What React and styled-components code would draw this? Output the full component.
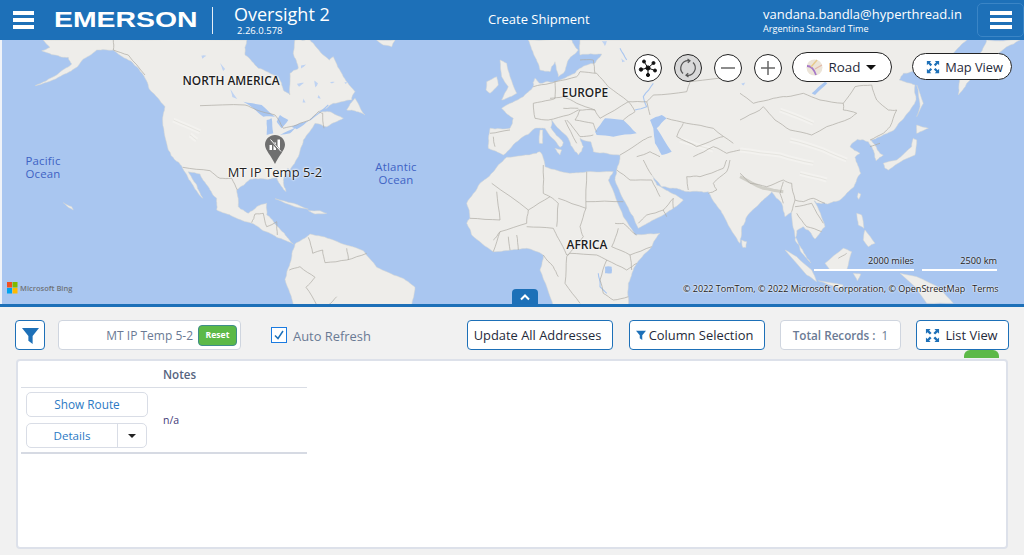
import React from "react";
import styled, { createGlobalStyle } from "styled-components";

const Global = createGlobalStyle`
  html, body { margin: 0; padding: 0; height: 100%; background: #f1f1f1; }
  body { font-family: "Open Sans", "Noto Sans", sans-serif; overflow: hidden; }
  * { box-sizing: border-box; }
`;

const Page = styled.div`
  width: 1024px; height: 555px; display: flex; flex-direction: column; background: #f1f1f1;
`;
const Header = styled.header`
  height: 40px; flex: none; background: #1d70b8; color: #fff; display: flex; align-items: center; position: relative;
`;
const Burger = styled.div`
  width: ${p => p.$w}px; display: flex; flex-direction: column; gap: 3.5px;
  span { display: block; height: 3.5px; background: #fff; }
`;
const LeftGroup = styled.div`
  display: flex; align-items: center; width: 488px; padding-left: 13px; height: 40px;
`;
const LogoSlot = styled.div`
  width: 142px; margin-left: 20px; margin-right: 1px; height: 24px; overflow: visible; margin-top: -1px;
`;
const Logo = styled.div`
  font-family: "Liberation Sans", sans-serif; font-weight: 700; font-size: 22px; line-height: 24px;
  transform: scaleX(1.29); transform-origin: left center; white-space: nowrap;
`;
const Divider = styled.div`
  width: 1px; height: 27px; background: #e6eef6; margin: 0 21px 0 15px;
`;
const Product = styled.div`
  display: flex; flex-direction: column; margin-top: -3px;
`;
const ProductName = styled.div`font-size: 18px; line-height: 22px; font-weight: 400;`;
const Version = styled.div`font-size: 9.5px; line-height: 9px; margin-left: 3px; margin-top: 1px;`;
const Center = styled.div`
  width: 275px; font-size: 13px; line-height: 16px; margin-top: -2px;
`;
const User = styled.div`
  width: 214px; display: flex; flex-direction: column;
`;
const Email = styled.div`font-size: 13px; line-height: 18px; white-space: nowrap;`;
const Zone = styled.div`font-size: 9.1px; line-height: 12px; white-space: nowrap;`;
const MenuButton = styled.div`
  width: 47px; height: 34px; border: 1px solid #3a85c6; border-radius: 5px;
  display: flex; align-items: center; justify-content: center;
`;

const MapArea = styled.div`
  height: 264px; flex: none; position: relative; overflow: hidden; background: #a9c6f0;
  border-left: 2px solid #f0f3f8;
`;
const MapSvg = styled.svg`
  position: absolute; left: -2px; top: 0; display: block;
`;
const Label = styled.div`
  position: absolute; white-space: nowrap; transform: translate(-50%, -50%);
  left: ${p => p.$x - 2}px; top: ${p => p.$y - 40}px;
`;
const Continent = styled(Label)`
  font-size: 11.9px; font-weight: 600; color: #1e1e1e; line-height: 14px;
  text-shadow: 0 0 2px #fff, 0 0 2px #fff;
`;
const Ocean = styled(Label)`
  font-size: 11.4px; letter-spacing: .2px; color: #3e62c4; line-height: 13px; text-align: center;
`;
const PinLabel = styled(Label)`
  font-size: 12.9px; color: #222; letter-spacing: .1px; line-height: 14px;
  text-shadow: 0 0 2px #fff, 0 0 2px #fff, 0 0 3px #fff;
`;
const Pin = styled.svg`
  position: absolute; left: 263px; top: 95px;
`;
const Controls = styled.div`
  position: absolute; top: 12px; left: 632px; display: flex; align-items: flex-start; gap: 10px;
`;
const CircleRow = styled.div`
  display: flex; gap: 12px; margin-top: 2px;
`;
const Circle = styled.div`
  width: 28px; height: 28px; border-radius: 50%; border: 1px solid #222;
  background: ${p => p.$on ? "#d9d9d9" : "#fff"};
  display: flex; align-items: center; justify-content: center;
`;
const Pill = styled.div`
  width: 100px; height: ${p => p.$h}px; border-radius: 15px; border: 1px solid #222; background: #fff;
  display: flex; align-items: center; justify-content: center; gap: ${p => p.$gap}px;
  font-size: ${p => p.$fs}px; color: #1f2a3a; margin-top: ${p => p.$mt}px; margin-left: ${p => p.$ml}px;
  padding-left: ${p => p.$pl}px; padding-right: ${p => p.$pr}px;
`;
const Caret = styled.span`
  width: 0; height: 0; border-left: 5px solid transparent; border-right: 5px solid transparent;
  border-top: 5.5px solid #111; display: inline-block;
`;
const BingMark = styled.div`
  position: absolute; left: 5px; top: 242px; display: flex; align-items: center; gap: 2px;
  font-size: 7.5px; font-weight: 600; color: #6f7378;
`;
const ScaleWrap = styled.div`
  position: absolute; top: 215px; left: 812px; display: flex; gap: 8px;
`;
const ScaleItem = styled.div`
  width: ${p => p.$w}px; text-align: right; font-size: 9.2px; line-height: 12px; color: #222;
  border-bottom: 2px solid #fff; height: 16px; text-shadow: 0 0 2px #fff;
`;
const Copyright = styled.div`
  position: absolute; left: 681px; top: 243px; font-size: 9.03px; line-height: 12px; color: #222;
  white-space: nowrap; display: flex; gap: 7px; text-shadow: 0 0 2px #fff, 0 0 2px #fff;
`;
const Collapse = styled.div`
  position: absolute; left: 510px; bottom: 0; width: 26px; height: 15px; background: #1d70b8;
  border-radius: 4px 4px 0 0; display: flex; align-items: center; justify-content: center;
`;
const Rule = styled.div`height: 3px; flex: none; background: #1d70b8;`;

const Toolbar = styled.div`
  height: 30px; margin: 13px 15px 0 15px; flex: none; display: flex; align-items: center; position: relative;
`;
const BtnBase = styled.div`
  height: 30px; border-radius: 4px; background: #fff; display: flex; align-items: center; white-space: nowrap;
  border: 1px solid ${p => p.$muted ? "#cfd5df" : "#1d70b8"};
  font-size: 12.9px; color: #1f2a3a;
`;
const FilterBtn = styled(BtnBase)`
  width: 30px; justify-content: center;
`;
const SearchBox = styled(BtnBase)`
  width: 183px; margin-left: 13px; justify-content: flex-end; padding-right: 3px; gap: 5px;
  color: #6a7a94; font-size: 12px; border-color: #cfd5df;
`;
const Reset = styled.div`
  width: 39px; height: 21px; border-radius: 4px; background: #5cb947; border: 1px solid #3f8d8a;
  color: #fff; font-size: 8.6px; font-weight: 700; display: flex; align-items: center; justify-content: center;
`;
const Check = styled.div`
  width: 16px; height: 16px; border: 1px solid #1b7be0; background: #fff; margin-left: 30px;
  display: flex; align-items: center; justify-content: center;
`;
const CheckLabel = styled.div`
  font-size: 12.9px; color: #6a7a94; margin-left: 6px; width: 174px; margin-top: 1px;
`;
const ActionBtn = styled(BtnBase)`
  width: ${p => p.$w}px; margin-left: ${p => p.$ml}px; justify-content: center; gap: ${p => p.$gap || 0}px;
  padding-right: ${p => p.$pr || 0}px;
`;
const Total = styled(ActionBtn)`
  color: #6a7a94; font-size: 11.7px; gap: 6px; b { font-weight: 600; }
`;
const GreenTab = styled.div`
  position: absolute; right: 10px; top: 30px; width: 35px; height: 8px; background: #5cb947; border-radius: 6px 6px 0 0;
`;
const Panel = styled.div`
  margin: 9px 16px 0 16px; height: 190px; flex: none; background: #fff; border: 2px solid #dde1ea; border-radius: 4px;
  padding: 0 0 0 3px;
`;
const Grid = styled.div`
  width: 286px; display: flex; flex-direction: column;
`;
const HeadRow = styled.div`
  height: 27px; border-bottom: 1px solid #d9dde5; padding-left: 142px; display: flex; align-items: center;
  font-size: 11.6px; font-weight: 600; color: #55647f;
`;
const BodyRow = styled.div`
  height: 66px; border-bottom: 2px solid #d6dae3; display: flex;
`;
const ActionCol = styled.div`
  width: 142px; padding: 4px 0 0 5px; display: flex; flex-direction: column; gap: 6px;
`;
const ShowRoute = styled.div`
  width: 122px; height: 25px; border: 1px solid #d9dde6; border-radius: 5px; color: #2c79c4; font-size: 11.8px;
  display: flex; align-items: center; justify-content: center; padding-bottom: 1px;
`;
const SplitBtn = styled.div`
  width: 121px; height: 25px; border: 1px solid #d9dde6; border-radius: 5px; display: flex; color: #2c79c4; font-size: 11.6px;
`;
const SplitMain = styled.div`
  width: 91px; border-right: 1px solid #d9dde6; display: flex; align-items: center; justify-content: center;
`;
const SplitCaret = styled.div`
  flex: 1; display: flex; align-items: center; justify-content: center;
  span { width: 0; height: 0; border-left: 4px solid transparent; border-right: 4px solid transparent; border-top: 4px solid #222; }
`;
const NoteCell = styled.div`
  font-size: 10.5px; color: #3f3a78; align-self: center;
`;

/* ---------- map geometry: traced in crop coordinates, converted to map pixels ---------- */
const Z = {
  a: [0, 0],
  b: [200, 0],
  e: [480, 0],
  f: [740, 0],
  g: [460, 120]
};
const pts = (k, s) => s.trim().split(/\s+/).map(p => {
  const [x, y] = p.split(",").map(Number);
  return [Z[k][0] + x / 3, Z[k][1] + y / 3];
});
let seed = 12345;
const rnd = () => { seed = (seed * 1103515245 + 12345) & 0x7fffffff; return seed / 0x7fffffff - 0.5; };
const rough = (p, closed, amp, iters) => {
  let cur = p;
  let a = amp;
  for (let it = 0; it < iters; it++) {
    const next = [];
    const n = closed ? cur.length : cur.length - 1;
    for (let i = 0; i < n; i++) {
      const A = cur[i], B = cur[(i + 1) % cur.length];
      next.push(A);
      const dx = B[0] - A[0], dy = B[1] - A[1], len = Math.hypot(dx, dy);
      if (len > 1.6) {
        const o = rnd() * a * Math.min(1, len / 6);
        next.push([(A[0] + B[0]) / 2 - dy / len * o, (A[1] + B[1]) / 2 + dx / len * o]);
      }
    }
    if (!closed) next.push(cur[cur.length - 1]);
    cur = next;
    a *= 0.6;
  }
  return cur;
};
const toD = (p, closed) => "M" + p.map(q => q[0].toFixed(1) + " " + q[1].toFixed(1)).join("L") + (closed ? "Z" : "");
const land = (...parts) => toD(rough(parts.flat(), true, 2, 3), true);
const soft = (k, s) => toD(rough(pts(k, s), true, 0.9, 2), true);
const line = (k, s) => toD(rough(pts(k, s), false, 1.1, 2), false);
const pond = (k, s) => {
  const p = pts(k, s);
  const cx = p.reduce((t, q) => t + q[0], 0) / p.length;
  const cy = p.reduce((t, q) => t + q[1], 0) / p.length;
  return toD(rough(p.map(q => [cx + (q[0] - cx) * 0.6, cy + (q[1] - cy) * 0.6]), true, 0.8, 2), true);
};

const LANDS = [
  land(
    pts("a", "130,0 150,22 125,32 165,45 205,52 215,72 170,105 105,137 175,112 225,85 245,62 290,30 340,30 385,60 410,80 432,108 450,150 495,200 488,245 505,330 525,360 545,378 575,430 608,475 590,435 565,395 600,402 625,440 650,475 650,510 700,530 755,550 790,572 830,592 880,612 860,590 825,552 800,525 800,490 770,500 745,520 715,500 710,450 750,418 800,418 830,412 845,440 858,455 850,420 862,385"),
    pts("b", "270,390 295,350 310,300 345,250 380,260 430,235 390,215 355,215 400,190 455,180 465,155 430,110 400,50 388,60 340,10 330,0 285,0 280,40 295,85 270,100 270,165 250,150 235,110 175,85 135,45 140,0")
  ),
  land(pts("a", "885,612 930,582 1000,600 1090,632 1130,682 1200,712 1245,742 1235,800 880,800 855,718 870,670")),
  land(pts("b", "440,210 465,175 495,225 470,215")),
  soft("b", "530,0 585,0 575,20 550,15"),
  soft("a", "825,476 880,490 925,508 885,500"),
  soft("a", "925,512 960,512 980,520 945,522"),
  soft("a", "190,488 215,500 220,510 205,502"),
  land(
    pts("e", "300,0"),
    pts("f", "680,0 640,40 590,60 530,90 490,100 478,120 525,135 528,180 500,222 462,270 420,290 392,300 412,330 430,345 408,362 396,322 385,305 352,298 330,320 360,340 345,352 362,400 342,440 300,480 262,492 240,490 222,482 255,560 225,597 205,570 190,560 170,572 165,600 192,640 212,668 180,630 165,590 155,515 135,530 125,490 95,455 70,480 20,530 5,560 0,610"),
    pts("g", "835,245 790,165 755,115 745,95 690,95 650,85 605,80 575,45 590,75 635,100 670,120 640,145 590,175 535,205 500,135 465,60 470,30"),
    pts("e", "420,345 340,335 332,305 300,295 310,320 295,345 285,335 265,295 215,240 212,262 250,308 240,322 195,265 165,265 120,297 70,345 25,325 30,265 90,265 100,235 65,205 130,170 160,140 165,115 180,130 205,125 225,125 285,100 300,85 345,70 365,42 300,45")
  ),
  land(pts("e", "145,0 160,40 180,90 210,95 225,65 235,110 250,100 265,60 295,30 275,0")),
  land(
    pts("e", "80,352 170,340 180,335 195,375"),
    pts("g", "255,20 330,40 380,35 460,35 445,60 490,170 525,225 600,220 575,260 530,310 505,370 505,440 280,440 240,330 250,285 200,265 150,270 100,275 35,225 20,190 30,175 20,130 60,70 95,40")
  ),
  soft("e", "60,60 80,70 90,110 110,160 80,175 65,180 85,140 65,110"),
  soft("e", "20,125 50,110 55,135 30,160 18,150"),
  soft("e", "225,325 245,330 240,345"),
  soft("e", "180,270 188,270 188,310 178,310"),
  soft("g", "845,240 860,245 858,262 848,262"),
  soft("f", "435,385 430,370 470,360 515,320 520,295 530,300 525,345 490,360 445,390"),
  soft("f", "530,255 565,265 540,275 530,280"),
  soft("f", "530,135 550,190 530,230 540,200 535,160"),
  soft("f", "355,458 362,462 356,478 352,470"),
  soft("f", "350,520 365,525 372,565 355,555"),
  soft("f", "375,570 405,610 385,620 370,600"),
  soft("f", "135,630 170,650 215,690 230,725 200,705"),
  soft("f", "255,670 310,625 335,635 320,690 270,690"),
  soft("f", "340,700 362,702 352,722"),
  soft("f", "480,700 530,710 600,745 640,790 560,790 530,745"),
  soft("f", "235,722 310,735 300,745"),
  land(pts("f", "840,0 800,20 730,70 680,130 655,165 660,110 700,90 720,40 740,0"))
];
const WATERS = [
  soft("b", "130,185 185,195 225,230 190,230 160,205"),
  soft("b", "200,240 215,235 220,280 200,285"),
  soft("b", "240,225 265,240 245,265 230,245"),
  soft("b", "240,285 290,260 270,280"),
  soft("b", "275,260 330,240 290,268"),
  soft("e", "345,275 375,235 430,240 470,280 400,290 350,285"),
  soft("e", "510,240 545,225 560,235 530,265 575,335 545,345 525,310 520,265"),
  soft("f", "215,160 255,125 262,130 225,165"),
  soft("g", "435,320 455,320 455,340 435,340")
];
const PONDS = [
  pond("b", "85,135 120,185 95,175"),
  pond("b", "55,60 80,90 70,100"),
  pond("b", "0,45 25,45 5,60"),
  pond("b", "285,130 320,125 295,145"),
  pond("b", "340,115 358,130 345,150"),
  pond("b", "385,125 410,125 395,132"),
  pond("b", "300,75 325,70 300,90"),
  pond("b", "430,125 450,125 435,135"),
  pond("b", "355,160 365,180 350,175"),
  pond("b", "310,170 320,190 305,190"),
  pond("e", "360,0 385,0 375,25"),
  pond("e", "420,50 440,65 425,70"),
  pond("f", "0,130 20,125 10,140")
];
const BORDERS = [
  line("b", "0,197 135,195 170,210 225,225 250,265 290,255 330,240 355,215 368,220 372,265"),
  line("a", "340,0 340,30 385,45 435,105"),
  line("a", "548,382 630,392 660,415 695,415 712,450"),
  line("a", "755,548 765,522 790,520 800,560 830,545 832,585"),
  line("a", "925,592 938,640 968,630 975,668 1040,660 1100,640"),
  line("a", "868,690 900,680 945,712 918,742 950,795"),
  line("a", "1040,625 1045,660"),
  line("a", "985,795 1010,770"),
  line("g", "95,70 205,150 270,110 295,130 290,200"),
  line("g", "250,15 250,100 270,110"),
  line("g", "110,95 120,180 30,175"),
  line("g", "205,150 200,190 120,215 100,275"),
  line("g", "380,35 378,145 295,115"),
  line("g", "378,125 490,125"),
  line("g", "378,145 360,200 370,230 320,290"),
  line("g", "200,200 280,205 295,235 320,285 330,280 410,285 440,300 500,330 530,310"),
  line("g", "440,300 420,360 430,400 460,420"),
  line("g", "465,190 490,190 530,225"),
  line("g", "475,205 455,260 510,285 575,260"),
  line("g", "320,290 315,370 360,430"),
  line("g", "250,285 280,320 295,350"),
  line("g", "145,230 150,270"), line("g", "170,225 175,270"), line("g", "120,215 100,240"),
  line("g", "510,285 515,330"), line("g", "460,420 505,410"),
  line("g", "470,30 510,60 575,60 600,110"),
  line("g", "535,190 560,165 610,150 640,115 640,145"),
  line("g", "620,170 610,150"),
  line("g", "550,0 575,45"),
  line("g", "685,90 680,50 720,50 790,25 800,0"),
  line("g", "745,100 770,90 760,70 800,35 810,0"),
  line("e", "160,140 210,130 225,125"),
  line("e", "225,125 225,175 210,180 160,190 165,235 205,240 265,225 295,210 345,210 360,235 445,185 385,140 350,100 300,95 290,110 225,125"),
  line("e", "210,175 250,170 290,190 345,210"),
  line("e", "250,205 295,205"),
  line("e", "300,210 285,240 340,250 350,275"),
  line("e", "260,240 300,290 340,285"),
  line("e", "255,240 290,310"),
  line("e", "30,280 90,270"), line("e", "40,290 45,320"),
  line("e", "445,185 465,215 430,240"),
  line("e", "500,185 520,165 620,155 630,125 780,105"),
  line("e", "445,185 500,185 510,225"),
  line("e", "560,235 620,250 700,265 760,310"),
  line("e", "610,250 590,290 650,320 700,300 730,290"),
  line("e", "515,290 490,300 420,345"),
  line("e", "470,350 510,335 540,350"),
  line("e", "640,350 700,320 740,340 780,330"),
  line("e", "300,60 340,60 345,100"),
  line("f", "0,160 40,190 100,175 140,170 190,160 240,180 310,190 345,140 395,135 410,180 445,210 470,210 450,260 430,280 390,300"),
  line("f", "70,200 105,240 150,270 215,285 260,260 330,235 350,220 310,210 310,190"),
  line("f", "0,240 60,210 70,200"),
  line("f", "0,400 30,430 80,440 130,420 155,430 165,480 190,485 220,475 255,490"),
  line("f", "130,425 120,460 130,490"),
  line("f", "165,480 155,515"),
  line("f", "165,500 215,490 250,550"),
  line("f", "170,520 200,560 245,575"),
  line("f", "390,320 420,310"),
  line("f", "295,655 320,640")
];
const RIVERS = [
  line("e", "520,130 490,170 500,200 465,210"),
  line("e", "420,25 440,60"),
  line("g", "415,340 420,380 440,400"),
  line("b", "330,240 385,195")
];
const RANGE = line("f", "0,410 70,445 130,455");
const SHADES = [
  line("f", "0,330 120,345 220,370"),
  line("f", "150,300 250,330 320,360"),
  line("f", "120,210 220,250"),
  line("f", "180,400 260,420"),
  line("e", "600,300 700,330"),
  line("a", "520,240 600,275"),
  line("a", "570,285 590,300")
];

function MapDrawing() {
  return (
    <MapSvg width="1024" height="265" viewBox="0 0 1024 265">
      {LANDS.map((d, i) => <path key={i} d={d} fill="#eeedea" stroke="#d7d6d0" strokeWidth="0.5" />)}
      {SHADES.map((d, i) => <path key={i} d={d} fill="none" stroke="#f3f2ef" strokeWidth="5" />)}
      {SHADES.map((d, i) => <path key={i} d={d} fill="none" stroke="#e6e5e0" strokeWidth="1" />)}
      {WATERS.map((d, i) => <path key={i} d={d} fill="#a9c6f0" />)}
      {PONDS.map((d, i) => <path key={i} d={d} fill="#bfd3f2" />)}
      <path d={RANGE} fill="none" stroke="#d0cfc8" strokeWidth="3" />
      {RIVERS.map((d, i) => <path key={i} d={d} fill="none" stroke="#a9c6f0" strokeWidth="1.1" />)}
      {BORDERS.map((d, i) => <path key={i} d={d} fill="none" stroke="#adaba4" strokeWidth="0.7" />)}
    </MapSvg>
  );
}

const ExpandIcon = ({ size = 16 }) => (
  <svg width={size} height={size} viewBox="0 0 16 16" fill="#1d70b8">
    <path d="M1 1h5L4.400 2.600 7 5.200 5.200 7 2.600 4.400 1 6z" />
    <path d="M15 1v5l-1.600-1.600L10.800 7 9 5.200l2.600-2.600L10 1z" />
    <path d="M1 15v-5l1.600 1.600L5.200 9 7 10.800l-2.600 2.600L6 15z" />
    <path d="M15 15h-5l1.600-1.600L9 10.800 10.800 9l2.600 2.600L15 10z" />
  </svg>
);
const FunnelIcon = ({ size }) => (
  <svg width={size} height={size} viewBox="0 0 16 16" fill="#1d70b8">
    <path d="M0 1h16L10 8.500V16L6 13V8.500z" />
  </svg>
);

export default function App() {
  return (
    <Page>
      <Global />
      <Header>
        <LeftGroup>
          <Burger $w={21}><span /><span /><span /></Burger>
          <LogoSlot><Logo>EMERSON</Logo></LogoSlot>
          <Divider />
          <Product>
            <ProductName>Oversight 2</ProductName>
            <Version>2.26.0.578</Version>
          </Product>
        </LeftGroup>
        <Center>Create Shipment</Center>
        <User>
          <Email>vandana.bandla@hyperthread.in</Email>
          <Zone>Argentina Standard Time</Zone>
        </User>
        <MenuButton><Burger $w={22}><span /><span /><span /></Burger></MenuButton>
      </Header>

      <MapArea>
        <MapDrawing />
        <Continent $x={231} $y={80}>NORTH AMERICA</Continent>
        <Continent $x={585} $y={92}>EUROPE</Continent>
        <Continent $x={587} $y={244}>AFRICA</Continent>
        <Ocean $x={43} $y={167}>Pacific<br />Ocean</Ocean>
        <Ocean $x={396} $y={173}>Atlantic<br />Ocean</Ocean>
        <Pin width="20" height="30" viewBox="0 0 20 30">
          <path d="M10 0C4.500 0 0 4.300 0 9.700c0 5.400 6.500 11.300 10 19.300 3.500-8 10-13.900 10-19.300C20 4.300 15.500 0 10 0z" fill="#6f6f6f" />
          <path d="M4.500 10h2.500v5H4.500zM8.500 7.500h2.500V15H8.500zM12.500 4.500H15V15h-2.500z" fill="#fff" />
          <path d="M5 4.500L15 16" stroke="#6f6f6f" strokeWidth="2.600" />
          <path d="M5.500 4.500L16 16.500" stroke="#fff" strokeWidth="1" />
        </Pin>
        <PinLabel $x={275} $y={172}>MT IP Temp 5-2</PinLabel>

        <Controls>
          <CircleRow>
            <Circle>
              <svg width="20" height="20" viewBox="0 0 20 20" stroke="#111" strokeWidth="1" fill="#111">
                <path d="M10 10L3 11.500M10 10L6 3.500M10 10L15.500 5M10 10L17 12.500M10 10L10 17" />
                <circle cx="10" cy="10" r="2.100" /><circle cx="3" cy="11.500" r="1.700" /><circle cx="6" cy="3.500" r="1.500" />
                <circle cx="15.500" cy="5" r="1.500" /><circle cx="17" cy="12.500" r="1.500" /><circle cx="10" cy="17" r="1.600" />
              </svg>
            </Circle>
            <Circle $on>
              <svg width="20" height="20" viewBox="0 0 20 20" fill="none" stroke="#555" strokeWidth="1.200">
                <path d="M5 15.500A7.500 7.500 0 0 1 11 2.700" /><path d="M15 4.500A7.500 7.500 0 0 1 9 17.300" />
                <path d="M9.500 1L12 2.800 9.800 4.800M10.500 19L8 17.200 10.200 15.200" />
              </svg>
            </Circle>
            <Circle>
              <svg width="18" height="18" viewBox="0 0 18 18" stroke="#666" strokeWidth="1.500"><path d="M2 9h14" /></svg>
            </Circle>
            <Circle>
              <svg width="18" height="18" viewBox="0 0 18 18" stroke="#666" strokeWidth="1.500"><path d="M2 9h14M9 2v14" /></svg>
            </Circle>
          </CircleRow>
          <Pill $h={30} $gap={6} $mt={0} $ml={0} $fs={13.4} $pl={0} $pr={2}>
            <svg width="17" height="17" viewBox="0 0 17 17">
              <circle cx="8.500" cy="8.500" r="8" fill="#ece4d8" />
              <path d="M1 7C5 7 8 10 10 16" stroke="#a678c8" strokeWidth="1.800" fill="none" />
              <path d="M11 1L5 8" stroke="#e7c98c" strokeWidth="1.400" />
              <path d="M9 10L16 6" stroke="#e3b9a8" strokeWidth="1.200" />
            </svg>
            <span>Road</span>
            <Caret />
          </Pill>
          <Pill $h={27} $gap={5} $mt={1} $ml={10} $fs={12.8} $pl={5} $pr={0}>
            <ExpandIcon size={14} />
            <span>Map View</span>
          </Pill>
        </Controls>

        <BingMark>
          <svg width="11" height="12" viewBox="0 0 11 12">
            <rect x="0" y="0" width="5" height="5.500" fill="#f25022" /><rect x="5.500" y="0" width="5" height="5.500" fill="#7fba00" />
            <rect x="0" y="6" width="5" height="5.500" fill="#00a4ef" /><rect x="5.500" y="6" width="5" height="5.500" fill="#ffb900" />
          </svg>
          <span>Microsoft Bing</span>
        </BingMark>
        <ScaleWrap>
          <ScaleItem $w={100}>2000 miles</ScaleItem>
          <ScaleItem $w={75}>2500 km</ScaleItem>
        </ScaleWrap>
        <Copyright>
          <span>© 2022 TomTom, © 2022 Microsoft Corporation, © OpenStreetMap</span>
          <span>Terms</span>
        </Copyright>
        <Collapse>
          <svg width="12" height="8" viewBox="0 0 12 8" fill="none" stroke="#fff" strokeWidth="2"><path d="M2 6.500L6 2.500l4 4" /></svg>
        </Collapse>
      </MapArea>
      <Rule />

      <Toolbar>
        <FilterBtn><FunnelIcon size={17} /></FilterBtn>
        <SearchBox>MT IP Temp 5-2<Reset>Reset</Reset></SearchBox>
        <Check>
          <svg width="12" height="12" viewBox="0 0 12 12" fill="none" stroke="#1d70b8" strokeWidth="1.500"><path d="M2 6.500l3 3 5-7.500" /></svg>
        </Check>
        <CheckLabel>Auto Refresh</CheckLabel>
        <ActionBtn $w={146} $ml={0} $pr={5}>Update All Addresses</ActionBtn>
        <ActionBtn $w={136} $ml={16} $gap={3} $pr={5}><FunnelIcon size={10} />Column Selection</ActionBtn>
        <Total $w={121} $ml={15} $muted><b>Total Records :</b> 1</Total>
        <ActionBtn $w={93} $ml={15} $gap={5} $pr={2}><ExpandIcon size={15} />List View</ActionBtn>
        <GreenTab />
      </Toolbar>

      <Panel>
        <Grid>
          <HeadRow>Notes</HeadRow>
          <BodyRow>
            <ActionCol>
              <ShowRoute>Show Route</ShowRoute>
              <SplitBtn>
                <SplitMain>Details</SplitMain>
                <SplitCaret><span /></SplitCaret>
              </SplitBtn>
            </ActionCol>
            <NoteCell>n/a</NoteCell>
          </BodyRow>
        </Grid>
      </Panel>
    </Page>
  );
}
